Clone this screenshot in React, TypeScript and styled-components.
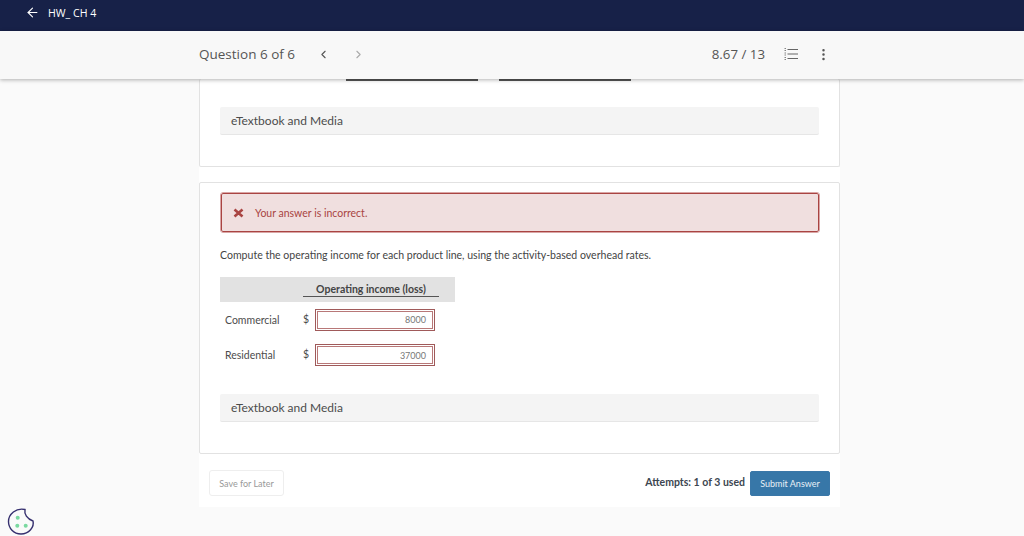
import React from 'react';
import styled, { createGlobalStyle } from 'styled-components';
import { ArrowLeft, ChevronLeft, ChevronRight, EllipsisVertical } from 'lucide-react';

const GlobalStyle = createGlobalStyle`
  html, body {
    margin: 0;
    height: 536px;
    overflow: hidden;
    background: #fafafa;
    font-family: Lato, "Open Sans", sans-serif;
    color: #4a4a4a;
  }
  * { box-sizing: border-box; }
`;

const answers = [
  { label: 'Commercial', value: '8000' },
  { label: 'Residential', value: '37000' },
];

const App = () => (
  <>
    <GlobalStyle />
    <TopBar>
      <ArrowLeft size={15} strokeWidth={1.8} color="#fff" />
      <Title>HW_ CH 4</Title>
    </TopBar>
    <Toolbar>
      <ToolbarInner>
        <QuestionCount>Question 6 of 6</QuestionCount>
        <NavButton><ChevronLeft size={13} color="#555" /></NavButton>
        <NavButton><ChevronRight size={13} color="#aaa" /></NavButton>
        <Score>8.67 / 13</Score>
        <ListIcon>
          <svg width="14" height="14" viewBox="0 0 14 14" fill="none" stroke="#666">
            <path d="M3.5 2.5H14M3.5 7H14M3.5 11.5H14" strokeWidth="1" />
            <path d="M0.5 1.5H2M0.5 3.5H2M0.5 6H2M0.5 8H2M0.5 10.5H2M0.5 12.5H2" strokeWidth="0.8" />
          </svg>
        </ListIcon>
        <EllipsisVertical size={15} strokeWidth={2} color="#555" />
      </ToolbarInner>
    </Toolbar>
    <Sheet>
      <TopCard>
        <Rules>
          <Rule />
          <Rule />
        </Rules>
        <MediaBar>eTextbook and Media</MediaBar>
      </TopCard>
      <AnswerCard>
        <ErrorBox>
          <ErrorMark>
            <svg width="11" height="10" viewBox="0 0 11 10">
              <path d="M9.5 1.5L1.5 8.5M1.5 1.5L9.5 8.5" stroke="#a94442" strokeWidth="2.6" />
            </svg>
          </ErrorMark>
          <span>Your answer is incorrect.</span>
        </ErrorBox>
        <Prompt>Compute the operating income for each product line, using the activity-based overhead rates.</Prompt>
        <AnswerTable>
          <HeaderRow>
            <HeaderLabel>Operating income (loss)</HeaderLabel>
          </HeaderRow>
          {answers.map((a) => (
            <AnswerRow key={a.label}>
              <RowLabel>{a.label}</RowLabel>
              <Dollar>$</Dollar>
              <AnswerInput>{a.value}</AnswerInput>
            </AnswerRow>
          ))}
        </AnswerTable>
        <BottomMedia>eTextbook and Media</BottomMedia>
      </AnswerCard>
      <Footer>
        <SaveButton>Save for Later</SaveButton>
        <Attempts>Attempts: 1 of 3 used</Attempts>
        <SubmitButton>Submit Answer</SubmitButton>
      </Footer>
    </Sheet>
    <CookieBadge>
      <svg width="28" height="29" viewBox="0 0 28 29" fill="none">
        <path
          d="M18 2.5C17 7 20 12 26 14C27.5 20 22 27 14 27C6.5 27 1.5 21 1.5 14.5C1.5 7 9 0.5 18 2.5Z"
          stroke="#36306f"
          strokeWidth="1.4"
        />
        <circle cx="10.7" cy="10.7" r="2" fill="#7ad9a0" />
        <circle cx="10.3" cy="18.7" r="2" fill="#7ad9a0" />
        <circle cx="18.7" cy="18.7" r="2" fill="#7ad9a0" />
      </svg>
    </CookieBadge>
  </>
);

export default App;

const TopBar = styled.header`
  height: 31px;
  background: #172148;
  display: flex;
  align-items: center;
  padding: 0 0 6px 25px;
  gap: 8px;
`;

const Title = styled.span`
  color: #fff;
  font-family: "Open Sans", sans-serif;
  font-size: 10.6px;
`;

const Toolbar = styled.div`
  position: relative;
  z-index: 2;
  height: 48px;
  background: #f8f8f8;
  box-shadow: 0 1px 4px rgba(0, 0, 0, 0.3);
`;

const ToolbarInner = styled.div`
  width: 641px;
  height: 100%;
  margin-left: 199px;
  padding: 0 9px 2px 0;
  display: flex;
  align-items: center;
`;

const QuestionCount = styled.span`
  font-family: "Open Sans", sans-serif;
  font-size: 13.5px;
  color: #555;
  margin-right: 22px;
`;

const NavButton = styled.span`
  display: flex;
  width: 34px;
  justify-content: flex-start;
  margin-right: 1px;
`;

const Score = styled.span`
  margin-left: auto;
  font-family: "Open Sans", sans-serif;
  font-size: 13.3px;
  color: #555;
`;

const ListIcon = styled.span`
  display: flex;
  margin: 0 18px 0 19px;
`;

const Sheet = styled.main`
  width: 641px;
  height: 428px;
  margin-left: 199px;
  background: #fff;
`;

const Card = styled.section`
  background: #fff;
  border: 1px solid #e2e2e2;
  border-radius: 2px;
`;

const TopCard = styled(Card)`
  height: 88px;
  border-top: none;
  padding: 0 20px;
`;

const Rules = styled.div`
  height: 28px;
  display: flex;
  justify-content: flex-start;
  gap: 21px;
  padding-left: 126px;
`;

const Rule = styled.div`
  width: 132px;
  height: 2px;
  background: #555;
`;

const MediaBar = styled.div`
  height: 28px;
  background: #f4f4f4;
  border-bottom: 1px solid #e6e6e6;
  border-radius: 2px;
  padding: 0 11px;
  display: flex;
  align-items: center;
  font-size: 12px;
  color: #4c4c4c;
`;

const AnswerCard = styled(Card)`
  height: 272px;
  margin-top: 15px;
  padding: 10px 20px 0;
`;

const ErrorBox = styled.div`
  height: 39px;
  margin-left: 1px;
  background: #f0dfdf;
  border: 1px solid #a94442;
  outline: 1px solid #d9a6a6;
  border-radius: 2px;
  display: flex;
  align-items: center;
  padding-left: 11px;
  font-size: 10.5px;
  color: #a94442;
`;

const ErrorMark = styled.span`
  display: flex;
  width: 22px;
`;

const Prompt = styled.p`
  margin: 16px 0 15px;
  font-size: 10.55px;
  line-height: 14px;
  color: #444;
`;

const AnswerTable = styled.div`
  width: 235px;
`;

const HeaderRow = styled.div`
  height: 25px;
  background: #e2e2e2;
  display: flex;
  justify-content: flex-end;
  padding: 5px 16px 0 0;
`;

const HeaderLabel = styled.div`
  width: 136px;
  height: 15px;
  border-bottom: 1px solid #555;
  text-align: center;
  font-size: 10.5px;
  font-weight: 700;
  line-height: 14px;
  color: #444;
`;

const AnswerRow = styled.div`
  height: 35.5px;
  display: flex;
  align-items: center;
  padding-left: 5px;
  font-size: 10.5px;
`;

const RowLabel = styled.span`
  width: 77px;
  color: #4c4c4c;
`;

const Dollar = styled.span`
  width: 13px;
  padding-left: 1px;
  margin-top: -2px;
`;

const AnswerInput = styled.div`
  width: 120px;
  height: 22px;
  border: 1px solid #a05a5a;
  outline: 1px solid #b87878;
  outline-offset: -3px;
  background: #fff;
  display: flex;
  align-items: center;
  justify-content: flex-end;
  padding-right: 8px;
  font-size: 9px;
  color: #777;
`;

const BottomMedia = styled(MediaBar)`
  margin-top: 21px;
`;

const Footer = styled.div`
  height: 53px;
  display: flex;
  align-items: center;
  padding: 5px 10px 0;
`;

const SaveButton = styled.button`
  width: 75px;
  height: 26px;
  border: 1px solid #eee;
  border-radius: 3px;
  background: #fff;
  padding: 0;
  font-family: inherit;
  font-size: 9px;
  color: #999;
`;

const Attempts = styled.span`
  margin-left: auto;
  margin-right: 5px;
  margin-top: -2px;
  font-size: 10.5px;
  font-weight: 700;
  color: #3c4650;
`;

const SubmitButton = styled.button`
  width: 80px;
  height: 25px;
  border: 1px solid #3a77a8;
  border-radius: 2px;
  background: #3777a8;
  padding: 0;
  font-family: inherit;
  font-size: 9px;
  color: #e8f0f6;
`;

const CookieBadge = styled.div`
  position: fixed;
  left: 7px;
  top: 507px;
  width: 28px;
  height: 29px;
`;
